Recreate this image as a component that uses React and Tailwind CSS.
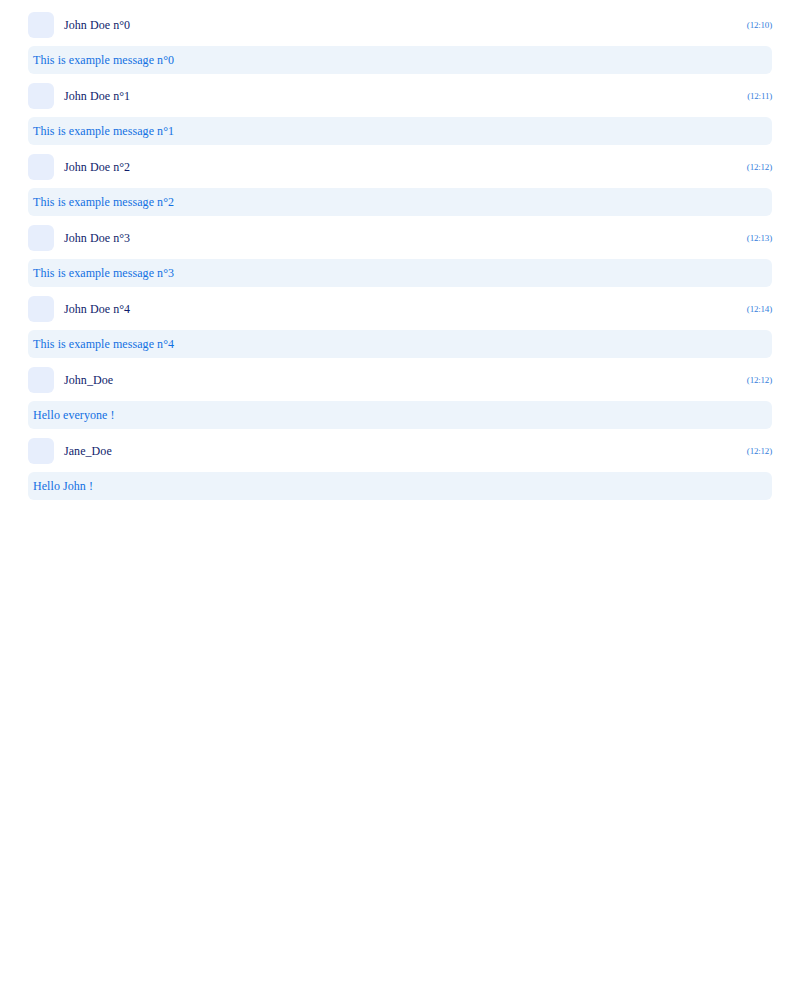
const messages = [
  { name: "John Doe n°0", time: "12:10", text: "This is example message n°0" },
  { name: "John Doe n°1", time: "12:11", text: "This is example message n°1" },
  { name: "John Doe n°2", time: "12:12", text: "This is example message n°2" },
  { name: "John Doe n°3", time: "12:13", text: "This is example message n°3" },
  { name: "John Doe n°4", time: "12:14", text: "This is example message n°4" },
  { name: "John_Doe", time: "12:12", text: "Hello everyone !" },
  { name: "Jane_Doe", time: "12:12", text: "Hello John !" },
];

function Message({ name, time, text }) {
  return (
    <li className="flex flex-col gap-2">
      <div className="flex h-[26px] items-center">
        <div className="size-[26px] shrink-0 rounded-md bg-[#e7eefc]" />
        <span className="ml-2.5 text-[12px] leading-[14px] tracking-[0.06px] text-[#0f1d6b]">{name}</span>
        <span className="ml-auto text-[9px] leading-[10px] tracking-[-0.2px] text-[#3580dc]">({time})</span>
      </div>
      <p className="h-7 rounded-md bg-[#edf4fb] px-[5px] text-[12px] leading-7 tracking-[0.06px] text-[#1270e2]">{text}</p>
    </li>
  );
}

export default function App() {
  return (
    <main className="min-h-screen bg-white px-7 pt-3 font-['Liberation_Serif',serif]">
      <ul className="flex flex-col gap-[9px]">
        {messages.map((m) => (
          <Message key={m.name} {...m} />
        ))}
      </ul>
    </main>
  );
}
